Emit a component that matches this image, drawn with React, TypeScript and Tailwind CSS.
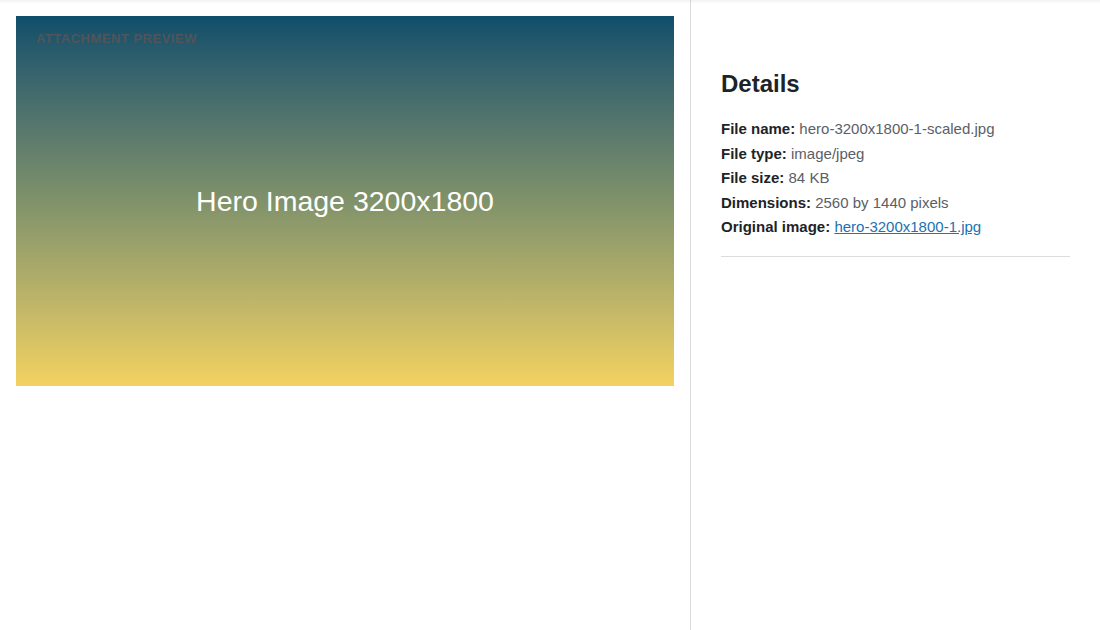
export default function App() {
  const rows: [string, string][] = [
    ['File name:', 'hero-3200x1800-1-scaled.jpg'],
    ['File type:', 'image/jpeg'],
    ['File size:', '84 KB'],
    ['Dimensions:', '2560 by 1440 pixels'],
  ]

  return (
    <div className="relative flex h-[630px] w-[1100px] bg-white font-['Liberation_Sans',Arial,sans-serif]">
      {/* faint top shadow */}
      <div className="pointer-events-none absolute inset-x-0 top-0 h-[4px] bg-gradient-to-b from-black/5 to-transparent" />

      {/* Preview */}
      <div className="w-[691px] shrink-0 border-r border-[#dcdcde] p-4">
        <div className="relative flex h-[370px] w-[658px] items-center justify-center bg-gradient-to-b from-[#0e4e6a] via-[#80926a] to-[#f3d260]">
          <span className="absolute left-5 top-[14px] text-[13px] font-bold uppercase leading-[18px] tracking-[0.5px] text-[#50555a]">
            Attachment Preview
          </span>
          <span className="text-[28.5px] leading-[34px] text-white">Hero Image 3200x1800</span>
        </div>
      </div>

      {/* Details */}
      <div className="flex-1 pl-[30px] pr-[30px] pt-[69px]">
        <h2 className="text-[24px] font-bold leading-[30px] text-[#1d2327]">Details</h2>
        <div className="mt-[18px] text-[15px] leading-[24.6px] text-[#5a6067]">
          {rows.map(([k, v]) => (
            <div key={k}>
              <strong className="text-[#1d2327]">{k}</strong> {v}
            </div>
          ))}
          <div>
            <strong className="text-[#1d2327]">Original image:</strong>{' '}
            <a href="#" className="text-[#2271b1] underline">hero-3200x1800-1.jpg</a>
          </div>
        </div>
        <hr className="mt-[16px] border-t border-[#dcdcde]" />
      </div>
    </div>
  )
}
